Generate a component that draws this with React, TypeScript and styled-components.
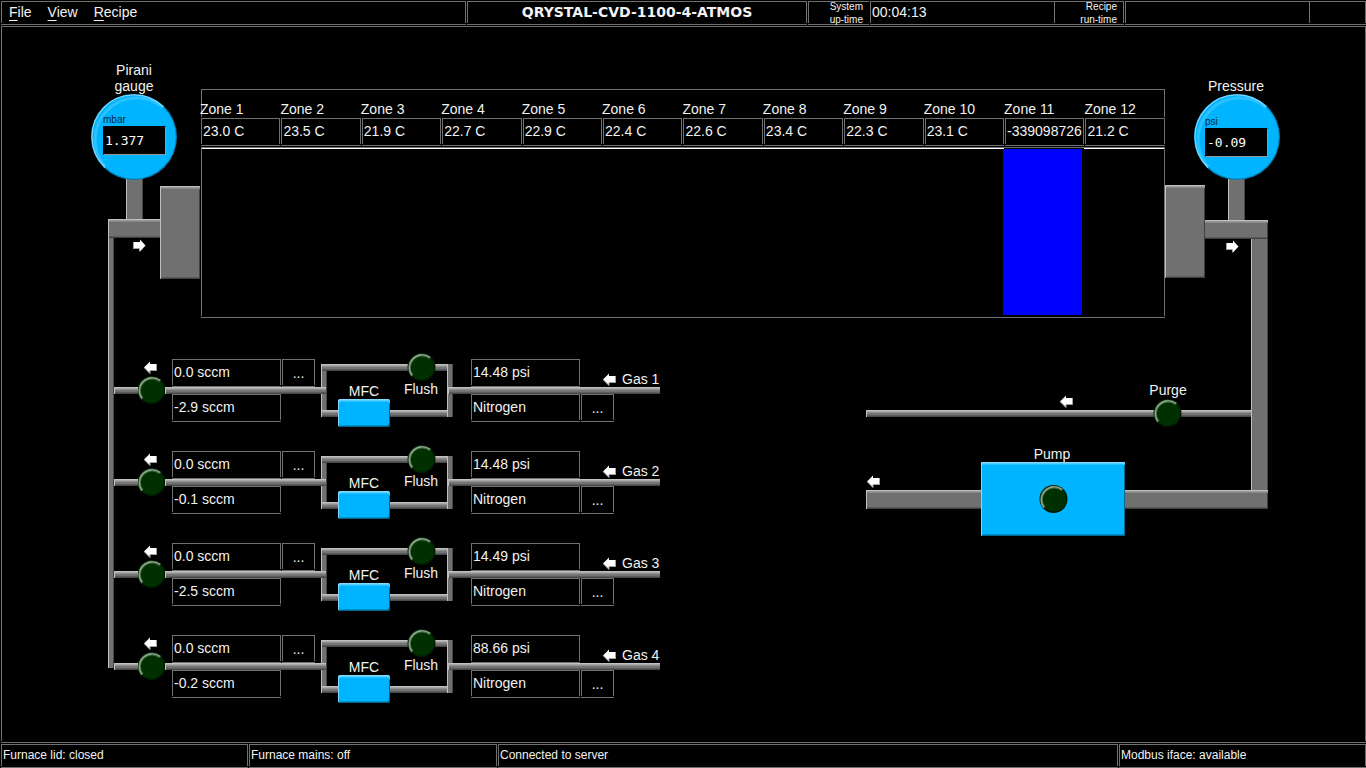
import React from 'react';
import styled, { createGlobalStyle, css } from 'styled-components';

const line = '#707070';
const blue = '#00b4ff';

const GlobalStyle = createGlobalStyle`
  *, *::before, *::after { box-sizing: border-box; }
  body {
    margin: 0;
    background: #000;
    color: #f2f2f2;
    font: 14px/16px "Liberation Sans", Arial, sans-serif;
  }
  button {
    margin: 0;
    padding: 0;
    border: 0;
    background: none;
    color: inherit;
    font: inherit;
    cursor: pointer;
  }
`;

/* Etched frame: three sides plus a detached bottom line. */
const frame = css`
  border: 1px solid ${line};
  border-bottom: 0;
  box-shadow: 0 1px 0 #000, 0 2px 0 ${line};
  margin-bottom: 2px;
`;

const Screen = styled.div`
  min-height: 100vh;
  padding: 1px 0 0 1px;
  display: flex;
  flex-direction: column;
  gap: 1px;
`;

const TopBar = styled.header`
  display: grid;
  grid-template-columns: 1fr 341px 62px 185px 70px 185px 56px;
`;

const BarCell = styled.div<{ $open?: 'left' | 'right'; $flush?: boolean }>`
  ${frame}
  height: 22px;
  margin-right: ${(p) => (p.$flush ? 0 : 1)}px;
  padding: 0 1px 2px;
  display: flex;
  align-items: center;
  white-space: nowrap;
  ${(p) => p.$open === 'left' && 'border-left: 0;'}
  ${(p) => p.$open === 'right' && 'border-right: 0;'}
`;

const Menu = styled.nav`
  display: flex;
  gap: 16px;
  padding-left: 6px;
`;

const MenuButton = styled.button`
  &::first-letter {
    text-decoration: underline;
    text-decoration-thickness: 1px;
    text-underline-offset: 3px;
  }
`;

const Title = styled.h1`
  flex: 1;
  margin: 0;
  text-align: center;
  font: bold 14px/16px "DejaVu Sans", sans-serif;
`;

const ClockLabel = styled.span`
  flex: 1;
  padding: 2px 5px 0 0;
  text-align: right;
  white-space: pre-line;
  font-size: 10px;
  line-height: 13px;
`;

const Plant = styled.main`
  ${frame}
  position: relative;
  flex: 1;
  padding: 62px 200px 22px 0;
`;

const StatusBar = styled.footer`
  display: grid;
  grid-template-columns: 248fr 249fr 621fr 247fr;
  font-size: 12px;
`;

/* ---------- furnace ---------- */

const Furnace = styled.section`
  margin-left: 199px;
`;

const ZoneTable = styled.table`
  width: calc(100% + 1px);
  table-layout: fixed;
  border-spacing: 0;
`;

const ZoneHead = styled.th`
  height: 28px;
  padding: 0;
  vertical-align: bottom;
  text-align: left;
  text-indent: -1px;
  font-weight: normal;
  white-space: nowrap;
  box-shadow: inset 0 1px 0 ${line};
  &:first-child { box-shadow: inset 1px 1px 0 ${line}; }
  &:last-child {
    border-right: 1px solid #000;
    box-shadow: inset -1px 1px 0 ${line};
  }
`;

const ZoneCell = styled.td`
  padding: 1px 1px 1px 0;
`;

const Readout = styled.output`
  ${frame}
  display: block;
  height: 26px;
  padding: 0 1px;
  line-height: 25px;
  white-space: nowrap;
`;

const Chamber = styled.div`
  ${frame}
  height: 169px;
  display: grid;
  grid-template-columns: repeat(12, 1fr);
`;

const Heat = styled.div<{ $fault?: boolean }>`
  ${(p) => (p.$fault
    ? 'background: #0000ff; margin: 1px 2px 1px -1px;'
    : 'border-top: 1px solid #fff;')}
`;

/* ---------- piping ---------- */

const Pipe = styled.div<{ $x: number; $y: number; $length: number; $bore: number; $vertical?: boolean }>`
  position: absolute;
  left: ${(p) => p.$x}px;
  top: ${(p) => p.$y}px;
  width: ${(p) => (p.$vertical ? p.$bore : p.$length)}px;
  height: ${(p) => (p.$vertical ? p.$length : p.$bore)}px;
  background: #707070;
  ${(p) => p.$vertical
    ? 'box-shadow: inset 1px 0 0 #c0c0c0, inset -1px 0 0 #484848;'
    : p.$bore < 10
      ? 'background: linear-gradient(#a8a8a8 2px, #909090 2px, #909090 3px, #787878 3px, #707070 5px, #5c5c5c 5px); box-shadow: inset 1px 1px 0 #c0c0c0, inset 0 -1px 0 #484848;'
      : 'box-shadow: inset 1px 1px 0 #c0c0c0, inset 0 2px 0 #989898, inset 0 3px 0 #888, inset -1px -1px 0 #404040, inset 0 -2px 0 #5c5c5c;'}
`;

const Flange = styled.div<{ $x: number; $y: number }>`
  position: absolute;
  left: ${(p) => p.$x}px;
  top: ${(p) => p.$y}px;
  width: 40px;
  height: 93px;
  background: #707070;
  border-radius: 1px;
  box-shadow: inset 1px 1px 0 #c0c0c0, inset 0 2px 0 #989898, inset 0 3px 0 #888,
    inset -1px -1px 0 #404040, inset 0 -2px 0 #5c5c5c;
`;

const Spot = styled.div<{ $x: number; $y: number }>`
  position: absolute;
  left: ${(p) => p.$x}px;
  top: ${(p) => p.$y}px;
  display: flex;
`;

const Tag = styled.div<{ $x: number; $y: number }>`
  position: absolute;
  left: ${(p) => p.$x}px;
  top: ${(p) => p.$y}px;
  transform: translateX(-50%);
  text-align: center;
  white-space: pre;
`;

const Side = styled.section<{ $side: 'left' | 'right' }>`
  position: absolute;
  top: 0;
  ${(p) => p.$side}: 0;
  width: ${(p) => (p.$side === 'left' ? 199 : 500)}px;
`;

const Drawing = styled.svg`
  display: block;
  flex: none;
`;

const ValveButton = styled.button`
  display: block;
  border-radius: 50%;
`;

const Arrow = ({ right }: { right?: boolean }) => (
  <Drawing width="13" height="13" viewBox="0 0 13 13" aria-hidden="true">
    {right ? (
      <>
        <path d="M12.500 6.500 7 0.500V3H0.500V10H7V12.500Z" fill="#fff" />
        <path d="M0.500 3V9.500H6.500V12.500" fill="none" stroke="#a0a0a0" />
      </>
    ) : (
      <>
        <path d="M0 6.500 6 0.500V3H12.500V10H6V12.500Z" fill="#fff" />
        <path d="M0.500 7 6 12.500V9.500H12.500V3" fill="none" stroke="#a0a0a0" />
      </>
    )}
  </Drawing>
);

const Valve = ({ label }: { label: string }) => (
  <ValveButton type="button" aria-label={label}>
    <Drawing width="29" height="28" viewBox="0 0 29 28">
      <circle cx="14.500" cy="14" r="14" fill="#001a00" />
      <circle cx="14.500" cy="14" r="12.600" fill="#003000" />
      <path d="M5.400 22.600A12.500 12.500 0 0 1 23 5" fill="none" stroke="#446844" strokeWidth="2.600" />
      <path d="M4.900 22.500A13 13 0 0 1 23.300 4.500" fill="none" stroke="#90aa90" strokeWidth="1.100" />
    </Drawing>
  </ValveButton>
);

const Dial = styled.div<{ $x: number; $y: number }>`
  position: absolute;
  left: ${(p) => p.$x}px;
  top: ${(p) => p.$y}px;
  display: grid;
  > * { grid-area: 1 / 1; }
`;

const DialFace = styled.div<{ $low?: boolean }>`
  z-index: 1;
  padding: ${(p) => (p.$low ? '21px 0 0 11px' : '19px 0 0 12px')};
  color: #002838;
  font-size: 10px;
  line-height: 13px;
`;

const DialValue = styled.output`
  display: block;
  width: 63px;
  height: 29px;
  padding-left: 1px;
  background: #000;
  border: 1px solid #000;
  border-right-color: #989898;
  border-bottom-color: #989898;
  color: #fff;
  font: 13px/27px "DejaVu Sans Mono", monospace;
`;

type GaugeProps = { x: number; y: number; unit: string; value: string; low?: boolean };

const Gauge = ({ x, y, unit, value, low }: GaugeProps) => (
  <Dial $x={x} $y={y}>
    <Drawing width="86" height="86" viewBox="0 0 86 86" aria-hidden="true">
      <circle cx="43" cy="43" r="43" fill="#007cb0" />
      <circle cx="43" cy="43" r="41.800" fill={blue} />
      <path d="M14.500 73A41.500 41.500 0 0 1 72 13.500" fill="none" stroke="#2cc1ff" strokeWidth="3" />
      <path d="M14 73.500A42 42 0 0 1 72 12.500" fill="none" stroke="#78d8ff" strokeWidth="1.300" />
    </Drawing>
    <DialFace $low={low}>
      {unit}
      <DialValue>{value}</DialValue>
    </DialFace>
  </Dial>
);

const Vessel = styled.div<{ $x: number; $y: number; $w: number; $h: number; $round?: boolean }>`
  position: absolute;
  left: ${(p) => p.$x}px;
  top: ${(p) => p.$y}px;
  width: ${(p) => p.$w}px;
  height: ${(p) => p.$h}px;
  display: flex;
  align-items: center;
  justify-content: center;
  background: ${blue};
  border-radius: ${(p) => (p.$round ? 3 : 1)}px;
  box-shadow: inset 1px 1px 0 #80daff, inset 0 2px 0 #58ceff, inset 0 3px 0 #28c0ff,
    inset -1px -1px 0 #00648c, inset 0 -2px 0 #0090cc;
`;

/* ---------- gas lines ---------- */

const Manifold = styled.section`
  margin: 35px 0 0 112px;
`;

const GasLine = styled.div`
  position: relative;
  width: 546px;
  height: 92px;
  display: flex;
`;

const InletValve = styled.div`
  position: relative;
  width: 58px;
  padding: 10px 0 0 23px;
  display: flex;
  flex-direction: column;
  gap: 2px;
  > svg { margin-left: 7px; }
`;

const Panel = styled.div`
  display: grid;
  grid-template-columns: 109px 33px;
  grid-template-rows: 28px 28px;
  column-gap: 1px;
  row-gap: 7px;
  padding-top: 8px;
`;

const MoreButton = styled.button`
  ${frame}
  height: 26px;
`;

const Bypass = styled.div`
  position: relative;
  width: 132px;
  margin: 0 18px 0 6px;
`;

const Source = styled.span`
  display: flex;
  align-items: center;
  gap: 6px;
  height: 40px;
  margin-left: 22px;
  white-space: nowrap;
`;

const temperatures = ['23.0 C', '23.5 C', '21.9 C', '22.7 C', '22.9 C', '22.4 C', '22.6 C', '23.4 C', '22.3 C', '23.1 C', '-339098726', '21.2 C'];

const gases = [
  { set: '0.0 sccm', flow: '-2.9 sccm', pressure: '14.48 psi', kind: 'Nitrogen' },
  { set: '0.0 sccm', flow: '-0.1 sccm', pressure: '14.48 psi', kind: 'Nitrogen' },
  { set: '0.0 sccm', flow: '-2.5 sccm', pressure: '14.49 psi', kind: 'Nitrogen' },
  { set: '0.0 sccm', flow: '-0.2 sccm', pressure: '88.66 psi', kind: 'Nitrogen' },
];

export default function App() {
  return (
    <Screen>
      <GlobalStyle />
      <TopBar>
        <BarCell>
          <Menu>
            {['File', 'View', 'Recipe'].map((name) => <MenuButton type="button" key={name}>{name}</MenuButton>)}
          </Menu>
        </BarCell>
        <BarCell><Title>QRYSTAL-CVD-1100-4-ATMOS</Title></BarCell>
        <BarCell $open="right"><ClockLabel>{'System\nup-time'}</ClockLabel></BarCell>
        <BarCell $flush><output>00:04:13</output></BarCell>
        <BarCell $open="left"><ClockLabel>{'Recipe\nrun-time'}</ClockLabel></BarCell>
        <BarCell $flush />
        <BarCell $open="left" $flush />
      </TopBar>

      <Plant>
        <Side $side="left">
          <Pipe $vertical $x={106} $y={210} $length={431} $bore={6} />
          <Pipe $vertical $x={124} $y={150} $length={43} $bore={17} />
          <Pipe $x={106} $y={192} $length={53} $bore={19} />
          <Flange $x={158} $y={159} />
          <Spot $x={131} $y={212}><Arrow right /></Spot>
          <Tag $x={132} $y={35}>{'Pirani\ngauge'}</Tag>
          <Gauge x={89} y={67} unit="mbar" value="1.377" />
        </Side>

        <Furnace>
          <ZoneTable>
            <thead>
              <tr>{temperatures.map((_, i) => <ZoneHead scope="col" key={i}>Zone {i + 1}</ZoneHead>)}</tr>
            </thead>
            <tbody>
              <tr>{temperatures.map((t, i) => <ZoneCell key={i}><Readout>{t}</Readout></ZoneCell>)}</tr>
            </tbody>
          </ZoneTable>
          <Chamber>
            {temperatures.map((t, i) => <Heat key={i} $fault={parseFloat(t) < 0} />)}
          </Chamber>
        </Furnace>

        <Manifold>
          {gases.map((g, i) => (
            <GasLine key={i}>
              <InletValve>
                <Arrow />
                <Valve label={`Gas ${i + 1} inlet valve`} />
              </InletValve>
              <Panel>
                <Readout>{g.set}</Readout>
                <MoreButton type="button">...</MoreButton>
                <Readout>{g.flow}</Readout>
              </Panel>
              <Bypass>
                <Pipe $vertical $x={0} $y={13} $length={52} $bore={6} />
                <Pipe $x={0} $y={13} $length={127} $bore={7} />
                <Pipe $x={0} $y={59} $length={127} $bore={7} />
                <Pipe $vertical $x={126} $y={13} $length={53} $bore={6} />
                <Spot $x={86} $y={2}><Valve label={`Gas ${i + 1} flush valve`} /></Spot>
                <Tag $x={100} $y={30}>Flush</Tag>
                <Tag $x={43} $y={32}>MFC</Tag>
                <Vessel $x={17} $y={48} $w={52} $h={28} $round />
              </Bypass>
              <Panel>
                <Readout>{g.pressure}</Readout>
                <Source><Arrow />Gas {i + 1}</Source>
                <Readout>{g.kind}</Readout>
                <MoreButton type="button">...</MoreButton>
              </Panel>
              <Pipe $x={0} $y={36} $length={24} $bore={7} />
              <Pipe $x={51} $y={36} $length={161} $bore={7} />
              <Pipe $x={334} $y={36} $length={212} $bore={7} />
            </GasLine>
          ))}
        </Manifold>

        <Side $side="right">
          <Pipe $vertical $x={363} $y={150} $length={44} $bore={17} />
          <Pipe $vertical $x={386} $y={211} $length={253} $bore={17} />
          <Pipe $x={339} $y={193} $length={64} $bore={19} />
          <Flange $x={300} $y={158} />
          <Spot $x={361} $y={213}><Arrow right /></Spot>
          <Tag $x={371} $y={51}>Pressure</Tag>
          <Gauge x={329} y={67} unit="psi" value="-0.09" low />

          <Pipe $x={1} $y={383} $length={385} $bore={7} />
          <Spot $x={195} $y={368}><Arrow /></Spot>
          <Tag $x={303} $y={355}>Purge</Tag>
          <Spot $x={288} $y={372}><Valve label="Purge valve" /></Spot>

          <Pipe $x={1} $y={463} $length={402} $bore={19} />
          <Spot $x={2} $y={448}><Arrow /></Spot>
          <Tag $x={187} $y={419}>Pump</Tag>
          <Vessel $x={116} $y={435} $w={144} $h={74}><Valve label="Pump" /></Vessel>
        </Side>
      </Plant>

      <StatusBar>
        <BarCell>Furnace lid: closed</BarCell>
        <BarCell>Furnace mains: off</BarCell>
        <BarCell>Connected to server</BarCell>
        <BarCell $flush>Modbus iface: available</BarCell>
      </StatusBar>
    </Screen>
  );
}
